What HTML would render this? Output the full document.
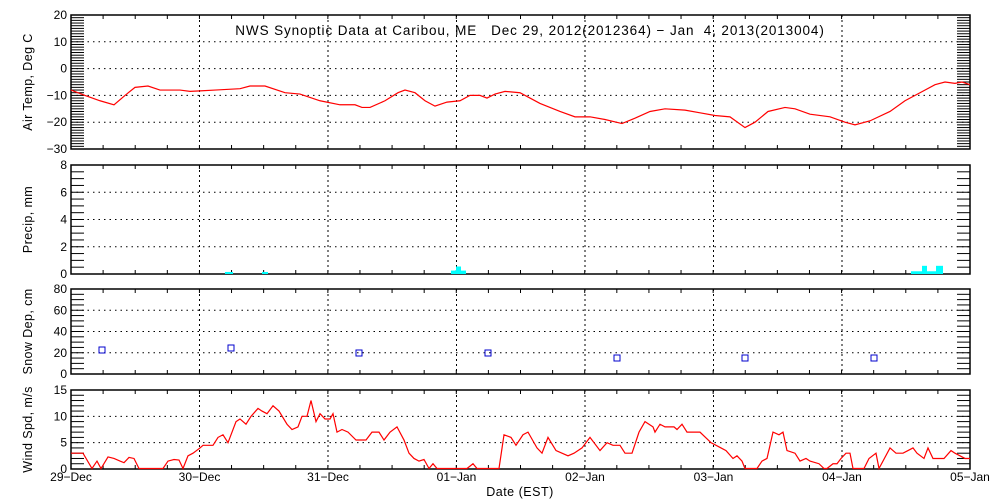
<!DOCTYPE html>
<html><head><meta charset="utf-8"><style>
html,body{margin:0;padding:0;background:#fff;width:1000px;height:500px;overflow:hidden}
svg{display:block;font-family:"Liberation Sans",sans-serif}
</style></head><body>
<svg id="s" width="1000" height="500" xmlns="http://www.w3.org/2000/svg"></svg>
<script>
var L=71,R=970,out=[];
var days=[71,199.5,328,456.5,585,713.5,842,970];
var P=[{t:15,b:149,max:20,min:-30,grid:[10,0,-10,-20],lab:[20,10,0,-10,-20,-30],mt:1,name:"Air Temp, Deg C"},
{t:165,b:274,max:8,min:0,grid:[2,4,6],lab:[8,6,4,2,0],mt:0.5,name:"Precip, mm"},
{t:289,b:374,max:80,min:0,grid:[20,40,60],lab:[80,60,40,20,0],mt:5,name:"Snow Dep, cm"},
{t:390,b:469,max:15,min:0,grid:[5,10],lab:[15,10,5,0],mt:1,name:"Wind Spd, m/s"}];
function Y(p,v){return p.t+(p.max-v)/(p.max-p.min)*(p.b-p.t);}
P.forEach(function(p){
 out.push('<rect x="'+L+'" y="'+p.t+'" width="'+(R-L)+'" height="'+(p.b-p.t)+'" fill="none" stroke="#000" stroke-width="1.5"/>');
 p.grid.forEach(function(g){var y=Y(p,g);out.push('<line x1="'+L+'" x2="'+R+'" y1="'+y+'" y2="'+y+'" stroke="#000" stroke-dasharray="1.5,4"/>');});
 for(var i=1;i<7;i++)out.push('<line x1="'+days[i]+'" x2="'+days[i]+'" y1="'+p.t+'" y2="'+p.b+'" stroke="#000" stroke-dasharray="2,3"/>');
 for(var h=0;h<=28;h++){var x=L+h*(R-L)/28;out.push('<line x1="'+x+'" x2="'+x+'" y1="'+p.t+'" y2="'+(p.t+4)+'" stroke="#000"/><line x1="'+x+'" x2="'+x+'" y1="'+p.b+'" y2="'+(p.b-4)+'" stroke="#000"/>');}
 for(var v=p.min;v<=p.max+1e-6;v+=p.mt){var y=Y(p,v);out.push('<line x1="'+L+'" x2="'+(L+13)+'" y1="'+y+'" y2="'+y+'" stroke="#000"/><line x1="'+(R-13)+'" x2="'+R+'" y1="'+y+'" y2="'+y+'" stroke="#000"/>');}
 p.lab.forEach(function(v){var y=Y(p,v);out.push('<text x="'+(L-4)+'" y="'+(y+4)+'" font-size="12" text-anchor="end">'+(v<0?'\u2212'+(-v):v)+'</text>');});
 var cy=(p.t+p.b)/2;out.push('<text x="32" y="'+cy+'" font-size="12.5" text-anchor="middle" transform="rotate(-90 32 '+cy+')" letter-spacing="0.4">'+p.name+'</text>');
});
var T=[[71,-8],[85,-10],[100,-12],[114,-13.5],[125,-10],[135,-7],[148,-6.5],[160,-8],[180,-8],[190,-8.5],[200,-8.3],[215,-8],[240,-7.5],[250,-6.5],[265,-6.5],[285,-9],[300,-9.5],[320,-12],[340,-13.5],[355,-13.5],[362,-14.5],[370,-14.5],[385,-12],[398,-9],[405,-8],[415,-9],[425,-12],[435,-14],[447,-12.5],[460,-12],[470,-10],[480,-10],[487,-11],[495,-9.5],[505,-8.5],[520,-9],[530,-11],[540,-13],[560,-16],[575,-18],[590,-18],[605,-19],[622,-20.5],[635,-18.5],[650,-16],[665,-15],[685,-15.5],[700,-16.5],[715,-17.5],[730,-18],[745,-22],[755,-20],[768,-16],[785,-14.5],[795,-15],[810,-17],[830,-18],[845,-20],[855,-21],[870,-19.5],[890,-16],[905,-12],[920,-9],[935,-6],[945,-5],[955,-5.5],[962,-5],[970,-6]];
out.push('<polyline fill="none" stroke="#f00" stroke-width="1.2" points="'+T.map(function(a){return a[0]+','+Y(P[0],a[1]);}).join(' ')+'"/>');
var pr=[[225,233,0.15],[262,268,0.15],[451,456,0.25],[456,461,0.55],[461,466,0.25],[911,922,0.2],[922,927,0.6],[927,936,0.2],[936,943,0.6]];
pr.forEach(function(a){var y=Y(P[1],a[2]);out.push('<rect x="'+a[0]+'" y="'+y+'" width="'+(a[1]-a[0])+'" height="'+(274-y)+'" fill="#0ff"/>');});
[[102,350],[231,348],[359,353],[488,353],[617,358],[745,358],[874,358]].forEach(function(a){out.push('<rect x="'+(a[0]-3)+'" y="'+(a[1]-3)+'" width="6" height="6" fill="none" stroke="#00c" stroke-width="1"/>');});
var W=[[71,3],[76,3],[83,3],[92,0],[97,1.5],[101,0],[108,2.3],[114,2],[120,1.5],[124,1.2],[129,2.2],[134,2],[139,0],[163,0],[168,1.5],[174,1.8],[179,1.7],[183,0],[188,2.5],[193,3],[200,4],[203,4.5],[213,4.5],[218,6],[223,6.5],[228,5],[236,9],[240,9.5],[246,8.5],[251,10],[258,11.5],[262,11],[267,10.5],[273,12],[279,11],[287,8.5],[292,7.5],[298,8],[302,10],[307,10],[311,13],[316,9],[320,10.5],[325,9.5],[330,9.5],[333,10.5],[337,7],[342,7.5],[348,7],[356,5.5],[366,5.5],[372,7],[379,7],[384,5.5],[390,7],[397,8],[404,5.5],[409,3],[414,2],[419,1.5],[424,1.8],[429,0],[433,1],[437,0],[467,0],[473,1],[477,0],[499,0],[504,6.5],[511,6],[516,4.5],[523,6.5],[528,7],[537,4],[542,3],[548,6],[556,3.5],[562,3],[568,2.5],[574,3],[582,4],[590,6],[600,3.5],[607,5],[613,4.5],[620,4.5],[625,3],[632,3],[639,7],[645,9],[653,8],[655,7],[660,8.5],[665,8],[674,8],[677,7.5],[682,8.5],[687,7],[700,7],[711,5],[721,4],[726,3.5],[733,2],[737,2.5],[742,1.5],[745,0],[757,0],[762,1.5],[767,2],[773,7],[779,6.5],[783,7],[787,3.5],[795,3],[800,1.5],[806,2],[810,1.5],[819,1],[824,0],[827,0],[833,1],[837,1],[841,2],[846,3],[850,3],[853,0],[864,0],[869,2],[876,3],[879,0],[890,4],[896,3],[903,3],[908,3.5],[913,4],[917,3],[924,2],[928,4],[933,2],[944,2],[951,3.5],[955,3],[960,2.5],[965,2],[970,2]];
out.push('<polyline fill="none" stroke="#f00" stroke-width="1.2" points="'+W.map(function(a){return a[0]+','+Math.min(468.5,Y(P[3],a[1]));}).join(' ')+'"/>');
var dl=["29-Dec","30-Dec","31-Dec","01-Jan","02-Jan","03-Jan","04-Jan","05-Jan"];
dl.forEach(function(d,i){out.push('<text x="'+days[i]+'" y="481" font-size="12" text-anchor="middle">'+d.replace('-','\u2212')+'</text>');});
out.push('<text x="520" y="496" font-size="12.5" text-anchor="middle" letter-spacing="0.5">Date (EST)</text>');
out.push('<text x="530" y="35" font-size="13.5" text-anchor="middle" letter-spacing="0.9" xml:space="preserve">NWS Synoptic Data at Caribou, ME   Dec 29, 2012(2012364) \u2212 Jan  4, 2013(2013004)</text>');
document.getElementById('s').innerHTML=out.join('');
</script>
</body></html>
